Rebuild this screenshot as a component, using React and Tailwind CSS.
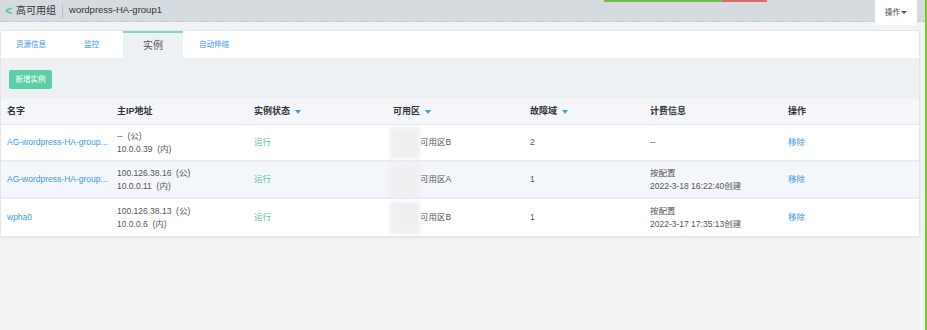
import React from 'react';

const rows = [
  {
    name: 'AG-wordpress-HA-group...',
    ip: ['--', '10.0.0.39'],
    zone: '可用区B',
    fault: '2',
    bill: null,
    bg: 'bg-white',
  },
  {
    name: 'AG-wordpress-HA-group...',
    ip: ['100.126.38.16', '10.0.0.11'],
    zone: '可用区A',
    fault: '1',
    bill: '2022-3-18 16:22:40创建',
    bg: 'bg-[#f3f6fa]',
  },
  {
    name: 'wpha0',
    ip: ['100.126.38.13', '10.0.0.6'],
    zone: '可用区B',
    fault: '1',
    bill: '2022-3-17 17:35:13创建',
    bg: 'bg-white',
  },
];

const cols = 'grid grid-cols-[116px_137px_139px_137px_120px_138px_1fr]';

function Caret() {
  return <span className="ml-[5px] inline-block w-0 h-0 border-l-[3.5px] border-r-[3.5px] border-t-[4px] border-l-transparent border-r-transparent border-t-[#3d9be9]" />;
}

export default function App() {
  return (
    <div className="relative w-[927px] h-[330px] bg-[#f2f3f5] border-r-2 border-[#7cc12e] font-['Liberation_Sans','Noto_Sans_CJK_SC',sans-serif] overflow-hidden">
      {/* top progress line */}
      <div className="absolute top-0 left-[604px] flex h-[2px]">
        <div className="w-[118px] bg-[#72bd4e]" />
        <div className="w-[45px] bg-[#dd6a6a]" />
      </div>

      {/* header */}
      <div className="h-[22px] bg-[#d6dbe0] border-b border-dashed border-[#c4c9ce] flex items-start justify-between pr-[8px]">
        <div className="h-[21px] flex items-center text-[#333]">
          <span className="ml-[5px] text-[12px] leading-none font-bold text-[#55c49a]">&lt;</span>
          <span className="ml-[4px] text-[10px]">高可用组</span>
          <span className="mx-[6px] w-px h-[14px] bg-[#b9bec4]" />
          <span className="text-[9.5px]">wordpress-HA-group1</span>
        </div>
        <div className="relative z-10 w-[42px] h-[25px] bg-white flex items-center justify-center text-[7.5px] text-[#444]">
          操作
          <span className="ml-[1px] inline-block w-0 h-0 border-l-[3px] border-r-[3px] border-t-[3px] border-l-transparent border-r-transparent border-t-[#555]" />
        </div>
      </div>

      {/* card */}
      <div className="mt-[8px] w-[920px] bg-white border border-[#e3e6ea] shadow-[0_1px_2px_rgba(0,0,0,0.06)]">
        <div className="h-[27px] flex text-[7.5px] text-[#3d9be9]">
          <div className="w-[68px] pl-[15px] flex items-center">资源信息</div>
          <div className="w-[54px] pl-[15px] flex items-center">监控</div>
          <div className="w-[60px] flex items-center justify-center bg-[#eef1f4] border-t-2 border-[#7fd8c0] text-[10px] text-[#555]">实例</div>
          <div className="pl-[16px] flex items-center">自动伸缩</div>
        </div>

        <div className="h-[41px] bg-[#eef1f4] pt-[12px] pl-[8px]">
          <div className="w-[43px] h-[19px] rounded-[2px] bg-[#5ccfa7] text-white text-[7.5px] flex items-center justify-center">新增实例</div>
        </div>

        <div className={`${cols} h-[26px] bg-[#f4f6f9] border-b border-[#e6eaee] text-[9px] font-bold text-[#333] items-center`}>
          <div className="pl-[6px]">名字</div>
          <div>主IP地址</div>
          <div className="flex items-center">实例状态<Caret /></div>
          <div className="flex items-center">可用区<Caret /></div>
          <div className="flex items-center">故障域<Caret /></div>
          <div>计费信息</div>
          <div>操作</div>
        </div>

        {rows.map((r, i) => (
          <div key={i} className={`${cols} h-[37px] ${r.bg} ${i < 2 ? 'border-b-2 border-[#e9edf1]' : ''} text-[8.5px] text-[#555] items-center`}>
            <div className="pl-[6px] whitespace-nowrap text-[#3d9be9]">{r.name}</div>
            <div className="leading-[13px]">
              <div>{r.ip[0]}&nbsp;&nbsp;(公)</div>
              <div>{r.ip[1]}&nbsp;&nbsp;(内)</div>
            </div>
            <div className="text-[#56c6a2]">运行</div>
            <div className="flex items-center -ml-[3px]">
              <div className="w-[30px] h-[32px] rounded-[3px] bg-[#eeeff1] blur-[2px]" />
              <span>{r.zone}</span>
            </div>
            <div>{r.fault}</div>
            <div className="leading-[13px] whitespace-nowrap">
              {r.bill ? (
                <>
                  <div>按配置</div>
                  <div>{r.bill}</div>
                </>
              ) : (
                <div>--</div>
              )}
            </div>
            <div className="text-[#3d9be9]">移除</div>
          </div>
        ))}
      </div>
    </div>
  );
}
